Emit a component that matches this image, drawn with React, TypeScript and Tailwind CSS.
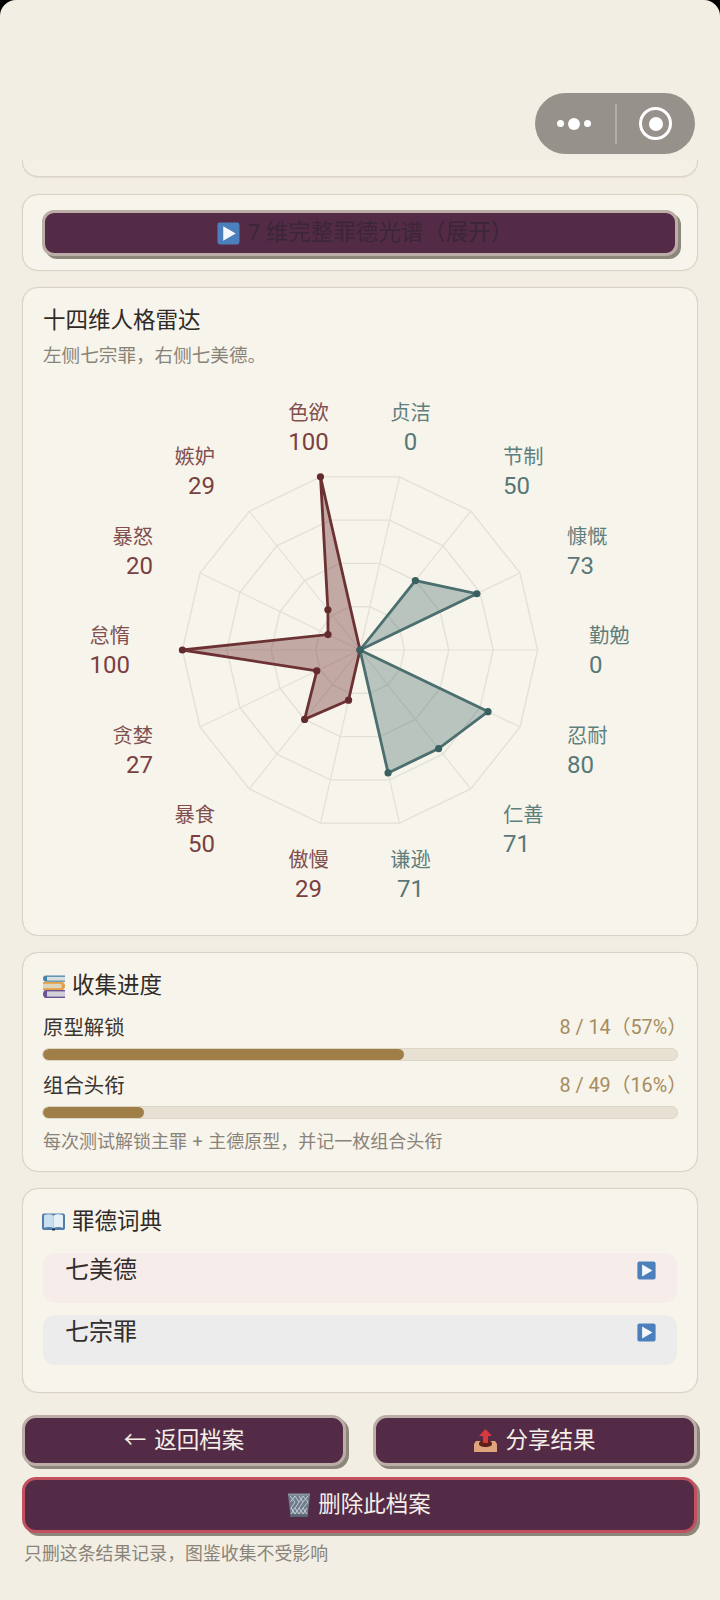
import React from "react";

const CX = 360;
const CY = 650;
const R = 177.6;
const pt = (i: number, r: number): [number, number] => {
  const a = ((12.857 + i * 25.714) * Math.PI) / 180;
  return [CX + r * Math.sin(a), CY - r * Math.cos(a)];
};
const gridPoly = (r: number) =>
  Array.from({ length: 14 }, (_, i) => pt(i, r).map((n) => n.toFixed(1)).join(",")).join(" ");

// clockwise from 贞洁
const virtues = [0, 50, 73, 0, 80, 71, 71];
const sins = [29, 50, 27, 100, 20, 29, 100]; // 傲慢 暴食 贪婪 怠惰 暴怒 嫉妒 色欲
const virtuePts = virtues.map((v, i) => pt(i, (v / 100) * R));
const sinPts = sins.map((v, i) => pt(i + 7, (v / 100) * R));
const sinPoly: [number, number][] = [[CX, CY], ...sinPts];

const SIN_L = "#824f4f";
const SIN_V = "#7a3f3f";
const VIR_L = "#5f7f7d";
const VIR_V = "#577877";

type L = { n: string; v: number; x: number; y: number; a: "start" | "end" | "middle"; s: boolean };
const labels: L[] = [
  { n: "色欲", v: 100, x: 308.5, y: 412, a: "middle", s: true },
  { n: "贞洁", v: 0, x: 410.5, y: 412, a: "middle", s: false },
  { n: "节制", v: 50, x: 503, y: 456.5, a: "start", s: false },
  { n: "嫉妒", v: 29, x: 215, y: 456.5, a: "end", s: true },
  { n: "慷慨", v: 73, x: 567, y: 536.5, a: "start", s: false },
  { n: "暴怒", v: 20, x: 153, y: 536.5, a: "end", s: true },
  { n: "勤勉", v: 0, x: 589, y: 635.5, a: "start", s: false },
  { n: "怠惰", v: 100, x: 130, y: 635.5, a: "end", s: true },
  { n: "忍耐", v: 80, x: 567, y: 735, a: "start", s: false },
  { n: "贪婪", v: 27, x: 153, y: 735, a: "end", s: true },
  { n: "仁善", v: 71, x: 503, y: 814.5, a: "start", s: false },
  { n: "暴食", v: 50, x: 215, y: 814.5, a: "end", s: true },
  { n: "傲慢", v: 29, x: 308.5, y: 859, a: "middle", s: true },
  { n: "谦逊", v: 71, x: 410.5, y: 859, a: "middle", s: false },
];

const polyStr = (p: [number, number][]) => p.map((q) => q.map((n) => n.toFixed(1)).join(",")).join(" ");

function Radar() {
  return (
    <svg width="636" height="530" viewBox="42 385 636 530" className="block">
      {[0.25, 0.5, 0.75, 1].map((k) => (
        <polygon key={k} points={gridPoly(R * k)} fill="none" stroke="#e3e0d9" strokeWidth="1.4" />
      ))}
      {Array.from({ length: 14 }, (_, i) => {
        const [x, y] = pt(i, R);
        return <line key={i} x1={CX} y1={CY} x2={x} y2={y} stroke="#e3e0d9" strokeWidth="1.2" />;
      })}
      <polygon points={polyStr(sinPoly)} fill="rgba(110,47,47,0.38)" stroke="#6c3233" strokeWidth="2.8" />
      <polygon points={polyStr(virtuePts)} fill="rgba(72,110,108,0.36)" stroke="#4b6f6e" strokeWidth="2.8" />
      {sinPts.map(([x, y], i) => (
        <circle key={i} cx={x} cy={y} r="3.6" fill="#642b2d" />
      ))}
      {virtuePts.map(([x, y], i) => (
        <circle key={i} cx={x} cy={y} r="3.6" fill="#38615f" />
      ))}
      {labels.map((l) => (
        <g key={l.n} textAnchor={l.a}>
          <text x={l.x} y={l.y + 7.5} fontSize="20.3" fill={l.s ? SIN_L : VIR_L}>
            {l.n}
          </text>
          <text x={l.x} y={l.y + 37.5} fontSize="24" fill={l.s ? SIN_V : VIR_V}>
            {l.v}
          </text>
        </g>
      ))}
    </svg>
  );
}

function PlayEmoji({ size }: { size: number }) {
  return (
    <svg width={size} height={size} viewBox="0 0 24 24" className="shrink-0">
      <rect x="0.5" y="0.5" width="23" height="23" rx="2.6" fill="#4c80bd" />
      <path d="M6.5 4.5 L19.5 12 L6.5 19.5 Z" fill="#f6f9fc" />
    </svg>
  );
}

function BooksEmoji() {
  return (
    <svg width="22" height="23" viewBox="0 0 22 23" className="shrink-0">
      <path d="M3 0.5H22V6.8H3C1 6.8 0 5.5 0 3.6S1 0.5 3 0.5Z" fill="#4a82ab" />
      <rect x="4" y="1.8" width="18" height="3.8" fill="#d9dfdc" />
      <path d="M0 7H19C21 7 22 9 22 11S21 15 19 15H0Z" fill="#e6a144" />
      <rect x="0" y="8.8" width="18.5" height="4.4" fill="#dcd6bf" />
      <path d="M3 15H22V23H3C1 23 0 21.2 0 19S1 15 3 15Z" fill="#6b5296" />
      <rect x="4" y="16.4" width="18" height="5.2" fill="#d3d2da" />
    </svg>
  );
}

function BookEmoji() {
  return (
    <svg width="23" height="18" viewBox="0 0 23 18" className="shrink-0">
      <path d="M0 3C0 1 1 0.5 2.5 0.5H20.5C22 0.5 23 1 23 3V15C23 16.5 22 17 20.5 17H2.5C1 17 0 16.5 0 15Z" fill="#4f7ea9" />
      <path d="M2 2.2C5 1 9 1 11.5 2.8V15C9 13.8 5 13.8 2 14.8Z" fill="#c9deee" />
      <path d="M21 2.2C18 1 14 1 11.5 2.8V15C14 13.8 18 13.8 21 14.8Z" fill="#e6f0f7" />
      <rect x="10" y="15.5" width="3" height="2" rx="0.5" fill="#21364d" />
    </svg>
  );
}

function OutboxEmoji() {
  return (
    <svg width="23" height="23" viewBox="0 0 23 23" className="shrink-0">
      <path d="M2 12H21L23 15V23H0V15Z" fill="#dda47e" />
      <path d="M5 15C5 12 8 11 11.5 11S18 12 18 15C18 17 15 18 11.5 18S5 17 5 15Z" fill="#5e1f16" />
      <path d="M11.5 0L18 7H14V14H9V7H5Z" fill="#d8393f" />
    </svg>
  );
}

function TrashEmoji() {
  return (
    <svg width="22" height="24" viewBox="0 0 22 24" className="shrink-0">
      <path d="M0 1H22L19.5 24H2.5Z" fill="#6f7c8c" />
      <g stroke="#c5cbd2" strokeWidth="1" fill="none">
        <path d="M2 3L7 9L3 15L7 21M7 3L2.5 9M7 3L11 9L7 15L11 21M11 3L15 9L11 15L15 21M15 3L11 9M15 3L20 9L15 15L19 21M20 3L15 9M3 15L7 21M7 15L3 21M11 15L7 21M15 15L11 21M19 15L15 21" />
      </g>
      <rect x="0" y="0.5" width="22" height="2" fill="#8a95a2" />
      <rect x="2.5" y="21.5" width="17" height="2.5" fill="#596575" />
    </svg>
  );
}

function Bar({ label, value, pct }: { label: string; value: string; pct: number }) {
  return (
    <div className="flex flex-col">
      <div className="flex h-[30px] items-center justify-between">
        <span className="pl-px text-[20.4px] leading-[30px] text-[#3b3530]">{label}</span>
        <span className="-mr-[9px] text-[19.8px] leading-[30px] text-[#a68c5e]">{value}</span>
      </div>
      <div className="mt-[5px] h-[13px] overflow-hidden rounded-full border border-[#dcd4c5] bg-[#e8e0d3]">
        <div className="h-full rounded-full bg-[#a07e48]" style={{ width: `${pct}%` }} />
      </div>
    </div>
  );
}

function DictRow({ name, bg }: { name: string; bg: string }) {
  return (
    <div className={`flex h-[50px] items-start justify-between rounded-[12px] pl-[22px] pr-[21px] ${bg}`}>
      <span className="text-[24px] leading-[34px] text-[#332e2b]">{name}</span>
      <span className="mt-[8px]">
        <PlayEmoji size={19} />
      </span>
    </div>
  );
}

const card = "rounded-[16px] border border-[#d9d3c5] bg-[#f7f4eb] shadow-[0_0_1px_#d9d3c5]";
const btn =
  "flex items-center justify-center gap-[8px] rounded-[14px] border-[3px] bg-[#542b46] text-[22.5px] text-[#f5efe8] shadow-[3px_3px_0_#8c867b]";

export default function App() {
  return (
    <div className="relative h-[1600px] w-[720px] overflow-hidden bg-black font-[family-name:Roboto,'Noto_Sans_CJK_SC',sans-serif]">
      <div className="flex h-full flex-col rounded-t-[16px] bg-[#f2eee3] px-[22px] pt-[160px]">
        <div className="h-[17px] shrink-0 rounded-b-[16px] border-x border-b border-[#d9d3c5] bg-[#f3f0e6] shadow-[0_1px_1px_#e4dfd2]" />

        <div className={`${card} mt-[17px] h-[77px] shrink-0 px-[19px] pt-[15px]`}>
          <div className="flex h-[46px] items-center justify-center gap-[8px] rounded-[12px] border-[3px] border-[#bcaea6] bg-[#542b46] text-[22.5px] text-[#3a2637] shadow-[3px_3px_0_#8c867b]">
            <PlayEmoji size={23} />
            <span className="-mr-[10px]">7 维完整罪德光谱（展开）</span>
          </div>
        </div>

        <div className={`${card} mt-[16px] h-[649px] shrink-0 px-[19px] pt-[15px]`}>
          <h2 className="pl-px text-[22.5px] leading-[34px] text-[#2f2b28]">十四维人格雷达</h2>
          <p className="mt-[4px] pl-px text-[18.6px] leading-[30px] text-[#8a8379]">左侧七宗罪，右侧七美德。</p>
          <div className="mt-[14px]">
            <Radar />
          </div>
        </div>

        <div className={`${card} mt-[16px] h-[220px] shrink-0 px-[19px] pt-[19px]`}>
          <h2 className="flex h-[28px] items-center gap-[7px] pl-px text-[22.5px] text-[#2f2b28]">
            <BooksEmoji />
            收集进度
          </h2>
          <div className="mt-[13px] flex flex-col gap-[10px]">
            <Bar label="原型解锁" value="8 / 14（57%）" pct={57} />
            <Bar label="组合头衔" value="8 / 49（16%）" pct={16} />
          </div>
          <p className="mt-[8px] pl-px text-[18px] leading-[30px] text-[#8a8379] [word-spacing:1px]">每次测试解锁主罪 + 主德原型，并记一枚组合头衔</p>
        </div>

        <div className={`${card} mt-[16px] h-[205px] shrink-0 px-[19px] pt-[17px]`}>
          <h2 className="flex h-[32px] items-center gap-[7px] text-[22.5px] text-[#2f2b28]">
            <BookEmoji />
            罪德词典
          </h2>
          <div className="ml-px mr-px mt-[15px] flex flex-col gap-[12px]">
            <DictRow name="七美德" bg="bg-[#f6edea]" />
            <DictRow name="七宗罪" bg="bg-[#ececec]" />
          </div>
        </div>

        <div className="mr-px mt-[22px] flex h-[51px] shrink-0 gap-[27px]">
          <button className={`${btn} flex-1 border-[#bcaea6]`}>
            <span>←</span>
            <span>返回档案</span>
          </button>
          <button className={`${btn} flex-1 border-[#bcaea6]`}>
            <OutboxEmoji />
            <span>分享结果</span>
          </button>
        </div>

        <button className={`${btn} mr-px mt-[11px] h-[56px] shrink-0 border-[#c2505f]`}>
          <TrashEmoji />
          <span>删除此档案</span>
        </button>

        <p className="ml-[2px] mt-[7px] text-[17.9px] leading-[28px] text-[#8a8379]">只删这条结果记录，图鉴收集不受影响</p>
      </div>

      {/* 胶囊 */}
      <div className="absolute left-[535px] top-[93px] flex h-[61px] w-[160px] items-center rounded-full bg-[#96918a]">
        <div className="flex w-[80px] items-center justify-center gap-[4px] pr-[2px]">
          <span className="h-[7px] w-[7px] rounded-full bg-white" />
          <span className="h-[12px] w-[12px] rounded-full bg-white" />
          <span className="h-[7px] w-[7px] rounded-full bg-white" />
        </div>
        <div className="h-[40px] w-[1.5px] bg-[#b3aea6]" />
        <div className="flex flex-1 items-center justify-center">
          <div className="flex h-[33px] w-[33px] items-center justify-center rounded-full border-[3.5px] border-white">
            <span className="h-[14px] w-[14px] rounded-full bg-white" />
          </div>
        </div>
      </div>
    </div>
  );
}
